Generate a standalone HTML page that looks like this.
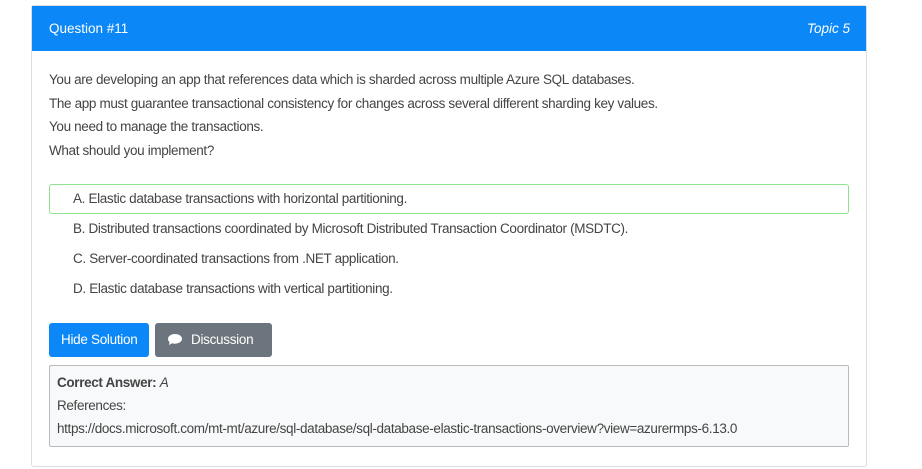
<!DOCTYPE html>
<html><head><style>
body{margin:0;background:#fff;font-family:"Liberation Sans",sans-serif;color:#444;font-size:13.5px;}
.card{position:absolute;left:31px;top:5px;width:834px;height:460px;border:1px solid #ddd;border-radius:3px;}
.hdr{background:#0b87f7;height:45px;color:#fff;display:flex;justify-content:space-between;align-items:center;padding:0 16px 0 17px;font-size:13.5px;}
.hdr i{font-style:italic}
.body{padding:0 17px;}
.q{margin-top:17px;line-height:23.7px;letter-spacing:-0.35px}
.opts{margin-top:21px}
.opt{height:28px;line-height:28px;padding-left:23px;border:1px solid transparent;border-radius:3px;letter-spacing:-0.35px}
.opt.c{border-color:#8fe08f}
.btns{margin-top:19px;display:flex;gap:6px}
.b{height:34px;line-height:33px;color:#fff;border-radius:3px;padding:0 12px;font-size:13.5px;white-space:nowrap;letter-spacing:-0.3px;box-sizing:border-box}
.blue{background:#0b87f7;width:100px}
.grey{background:#6c757d;width:117px}
.ans{margin-top:8px;border:1px solid #bbb;border-radius:2px;background:#f8f9fa;padding:5px 7px;line-height:23px;height:70px;letter-spacing:-0.35px}
</style></head><body>
<div class="card">
<div class="hdr"><span>Question #11</span><i>Topic 5</i></div>
<div class="body">
<div class="q">You are developing an app that references data which is sharded across multiple Azure SQL databases.<br>The app must guarantee transactional consistency for changes across several different sharding key values.<br>You need to manage the transactions.<br>What should you implement?</div>
<div class="opts">
<div class="opt c">A. Elastic database transactions with horizontal partitioning.</div>
<div class="opt">B. Distributed transactions coordinated by Microsoft Distributed Transaction Coordinator (MSDTC).</div>
<div class="opt">C. Server-coordinated transactions from .NET application.</div>
<div class="opt">D. Elastic database transactions with vertical partitioning.</div>
</div>
<div class="btns"><div class="b blue">Hide Solution</div><div class="b grey"><svg width="16" height="13" viewBox="0 0 16 13" style="vertical-align:-2px;margin-right:8px"><path d="M8 1C4 1 1 3.2 1 6c0 1.3.6 2.4 1.7 3.2L1.8 12l3.4-1.7c.9.3 1.8.4 2.8.4 4 0 7-2.2 7-4.9S12 1 8 1z" fill="#fff"/></svg>Discussion</div></div>
<div class="ans"><b>Correct Answer:</b> <i>A</i><br>References:<br>https://docs.microsoft.com/mt-mt/azure/sql-database/sql-database-elastic-transactions-overview?view=azurermps-6.13.0</div>
</div></div>
</body></html>
